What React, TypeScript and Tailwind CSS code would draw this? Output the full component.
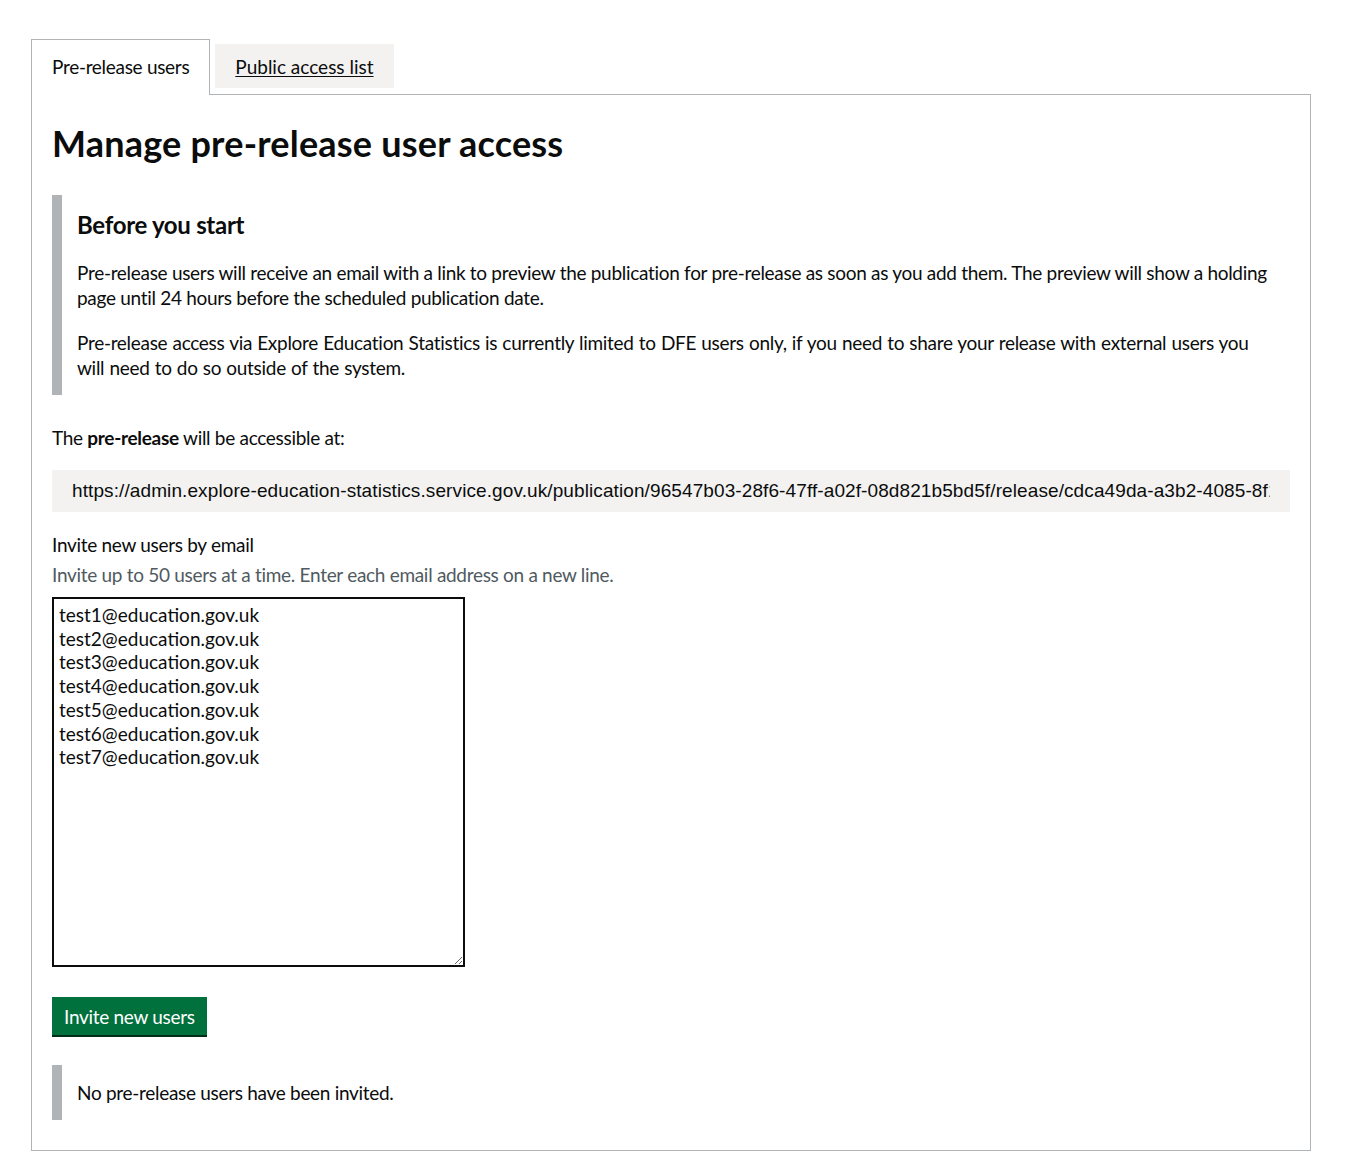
import React, { useState } from 'react';

const emails = [
    'test1@education.gov.uk',
    'test2@education.gov.uk',
    'test3@education.gov.uk',
    'test4@education.gov.uk',
    'test5@education.gov.uk',
    'test6@education.gov.uk',
    'test7@education.gov.uk',
].join('\n');

const releaseUrl =
    'https://admin.explore-education-statistics.service.gov.uk/publication/96547b03-28f6-47ff-a02f-08d821b5bd5f/release/cdca49da-a3b2-4085-8f1e-08d821b5e8e6/prerelease/content';

const App: React.FC = () => {
    const [tab, setTab] = useState<'users' | 'public'>('users');
    const [value, setValue] = useState(emails);

    return (
        <div className="min-h-screen bg-white pl-[31px] pt-[39px] pb-6 font-['Lato','Noto_Sans',sans-serif] text-[#0b0c0c] tracking-[-0.3px]">
            <div className="w-[1280px]">
                <div className="flex items-end gap-[5px]">
                    <button
                        onClick={() => setTab('users')}
                        className="relative -mb-px h-[56px] border border-b-0 border-[#b1b4b6] bg-white px-5 pt-[14px] text-left text-[19px] leading-[25px]"
                    >
                        <span className="block h-full">Pre-release users</span>
                    </button>
                    <button
                        onClick={() => setTab('public')}
                        className="mb-[6px] h-[44px] bg-[#f3f2f1] px-5 text-[19px] leading-[25px] tracking-normal underline underline-offset-2"
                    >
                        Public access list
                    </button>
                </div>

                <div className="border border-[#b1b4b6] px-5 pt-[28px] pb-[30px]">
                    <h2 className="text-[36px] font-bold leading-[40px] tracking-[0.2px]">Manage pre-release user access</h2>

                    <div className="mt-[32px] border-l-[10px] border-[#b1b4b6] py-[15px] pl-[15px] pr-[15px]">
                        <h3 className="text-[24px] font-bold leading-[30px]">Before you start</h3>
                        <p className="mt-[20px] text-[19px] leading-[25px]">
                            Pre-release users will receive an email with a link to preview the publication for pre-release as soon as you add them. The preview will show a holding page until 24 hours before the scheduled publication date.
                        </p>
                        <p className="mt-[20px] text-[19px] leading-[25px] [word-spacing:0.6px]">
                            Pre-release access via Explore Education Statistics is currently limited to DFE users only, if you need to share your release with external users you will need to do so outside of the system.
                        </p>
                    </div>

                    <p className="mt-[30px] text-[19px] leading-[25px]">
                        The <strong className="font-bold">pre-release</strong> will be accessible at:
                    </p>

                    <div className="mt-[20px] bg-[#f3f2f1] py-[8px] px-5">
                        <div className="overflow-hidden whitespace-nowrap font-['Liberation_Sans',Arial,sans-serif] text-[19px] leading-[26px] tracking-[0.1px]">
                            {releaseUrl}
                        </div>
                    </div>

                    <label htmlFor="invite" className="mt-[20px] block text-[19px] leading-[25px]">
                        Invite new users by email
                    </label>
                    <p className="mt-[5px] text-[19px] leading-[25px] text-[#505a5f]">
                        Invite up to 50 users at a time. Enter each email address on a new line.
                    </p>

                    <textarea
                        id="invite"
                        value={value}
                        onChange={(e) => setValue(e.target.value)}
                        className="mt-[10px] block h-[370px] w-[413px] resize border-2 border-[#0b0c0c] px-[5px] py-[4px] text-[19px] leading-[23.7px] tracking-normal outline-none"
                    />

                    <button className="mt-[30px] bg-[#00703c] px-[12px] pt-[8px] pb-[7px] text-[19px] leading-[23px] text-white shadow-[0_2px_0_#002d18]">
                        Invite new users
                    </button>

                    <div className="mt-[30px] border-l-[10px] border-[#b1b4b6] py-[15px] pl-[15px]">
                        <p className="text-[19px] leading-[25px]">No pre-release users have been invited.</p>
                    </div>
                </div>
            </div>
        </div>
    );
};

export default App;
